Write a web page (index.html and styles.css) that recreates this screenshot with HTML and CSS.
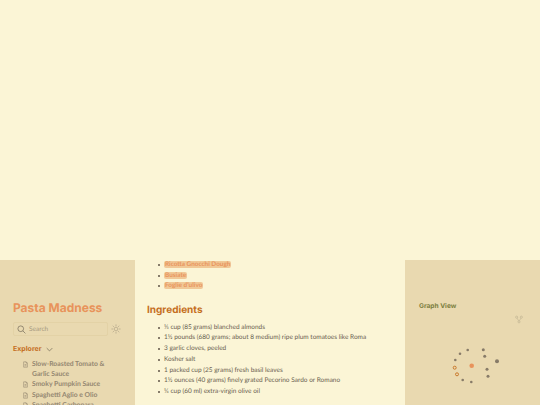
FILE: index.html
```html
<!DOCTYPE html>
<html lang="en">
<head>
<meta charset="utf-8">
<title>Pasta Madness</title>
<link rel="stylesheet" href="styles.css">
</head>
<body>
<div class="page">
  <aside class="left">
    <h1 class="title">Pasta Madness</h1>
    <div class="search-row">
      <div class="search">
        <svg class="search-icon" viewBox="0 0 12 12"><circle cx="5" cy="5" r="3.8"/><path d="M7.8 7.8 11.2 11.2"/></svg>
        <span>Search</span>
      </div>
      <svg class="sun" viewBox="0 0 12 12"><circle cx="6" cy="6" r="2.2"/><path d="M6 .5v2M6 9.5v2M.5 6h2M9.5 6h2M2.1 2.1l1.4 1.4M8.5 8.5l1.4 1.4M2.1 9.9l1.4-1.4M8.5 3.5l1.4-1.4"/></svg>
    </div>
    <div class="explorer"><span>Explorer</span>
      <svg class="chev" viewBox="0 0 10 6"><path d="M1 1l4 4 4-4"/></svg>
    </div>
    <ul class="files">
      <li><svg class="file" viewBox="0 0 8 10"><path d="M1 .7h4l2 2v6.6H1zM5 .7v2h2M2.5 5h3M2.5 7h3"/></svg><span>Slow-Roasted Tomato &amp; Garlic Sauce</span></li>
      <li><svg class="file" viewBox="0 0 8 10"><path d="M1 .7h4l2 2v6.6H1zM5 .7v2h2M2.5 5h3M2.5 7h3"/></svg><span>Smoky Pumpkin Sauce</span></li>
      <li><svg class="file" viewBox="0 0 8 10"><path d="M1 .7h4l2 2v6.6H1zM5 .7v2h2M2.5 5h3M2.5 7h3"/></svg><span>Spaghetti Aglio e Olio</span></li>
      <li><svg class="file" viewBox="0 0 8 10"><path d="M1 .7h4l2 2v6.6H1zM5 .7v2h2M2.5 5h3M2.5 7h3"/></svg><span>Spaghetti Carbonara</span></li>
    </ul>
  </aside>
  <main class="center">
    <ul class="links">
      <li><mark>Ricotta Gnocchi Dough</mark></li>
      <li><mark>Busiate</mark></li>
      <li><mark>Foglie d’ulivo</mark></li>
    </ul>
    <h2 class="heading">Ingredients</h2>
    <ul class="ingredients">
      <li>⅓ cup (85 grams) blanched almonds</li>
      <li>1½ pounds (680 grams; about 8 medium) ripe plum tomatoes like Roma</li>
      <li>3 garlic cloves, peeled</li>
      <li>Kosher salt</li>
      <li>1 packed cup (25 grams) fresh basil leaves</li>
      <li>1½ ounces (40 grams) finely grated Pecorino Sardo or Romano</li>
      <li>¼ cup (60 ml) extra-virgin olive oil</li>
    </ul>
  </main>
  <aside class="right">
    <div class="graph-head">Graph View</div>
    <div class="graph-canvas">
      <svg class="graph-icon" viewBox="0 0 12 12"><circle cx="2.5" cy="2.5" r="1.6"/><circle cx="9.5" cy="2.5" r="1.6"/><circle cx="6" cy="9.5" r="1.6"/><path d="M3.2 4l2.2 4M8.8 4 6.6 8"/></svg>
      <svg class="graph" viewBox="0 0 135 145">
        <circle class="n" cx="62.7" cy="90" r="1.3"/>
        <circle class="n" cx="78.3" cy="89.7" r="1.5"/>
        <circle class="n" cx="55" cy="93.7" r="1.3"/>
        <circle class="n" cx="79.7" cy="96.3" r="1.5"/>
        <circle class="n" cx="92" cy="101.3" r="2"/>
        <circle class="n" cx="50.3" cy="100" r="1.3"/>
        <circle class="hub" cx="66.7" cy="105.7" r="2.3"/>
        <circle class="ring" cx="49.7" cy="107.7" r="1.5"/>
        <circle class="n" cx="82" cy="109.3" r="1.5"/>
        <circle class="ring" cx="52" cy="114.3" r="1.5"/>
        <circle class="n" cx="83" cy="116.3" r="1.5"/>
        <circle class="n" cx="57.7" cy="120" r="1.3"/>
        <circle class="n" cx="66.3" cy="122" r="1.3"/>
      </svg>
    </div>
  </aside>
</div>
</body>
</html>
```
FILE: styles.css
```css
* { box-sizing: border-box; }
html, body { margin: 0; height: 100%; overflow: hidden; }
body { background: #fbf5d6; font-family: Lato, sans-serif; color: #6a5f50; text-rendering: geometricPrecision; }
.page { display: grid; grid-template-columns: 135px 270px 135px; margin-top: 260px; height: 145px; overflow: hidden; }
.left, .right { background: #e9d9b0; }
.left { padding: 41px 13px 0; }
.title { margin: 0; font: 700 12px/14px Inter, sans-serif; color: #e8935b; }
.search-row { display: flex; align-items: center; gap: 4px; margin-top: 7px; }
.search { width: 95px; height: 14px; border: 1px solid #e3d2a6; border-radius: 2px; display: flex; align-items: center; gap: 3px; padding-left: 3px; font-size: 6.5px; color: #a79a80; }
.search-icon { width: 9px; height: 9px; fill: none; stroke: #6f6655; stroke-width: .9; }
.sun { width: 10px; height: 10px; margin-left: -1px; fill: none; stroke: #a79a80; stroke-width: .7; }
.explorer { display: flex; align-items: center; gap: 4px; margin-top: 8px; font: 700 7px/10px Inter, sans-serif; color: #c56f1f; }
.chev { width: 7px; height: 5px; fill: none; stroke: #6f6655; stroke-width: 1; }
.files { list-style: none; margin: 5px 0 0; padding: 0 10px 0 10px; font-size: 6.8px; font-weight: 700; line-height: 10.2px; color: #948770; }
.files li { display: flex; gap: 4px; }
.file { flex: none; width: 5px; height: 7px; margin-top: 2px; fill: none; stroke: #8a7d68; stroke-width: .8; }
.center { padding: 0 12px; }
.links { list-style: none; margin: 0; padding: 0 0 0 17px; font-size: 6.4px; line-height: 10.5px; font-weight: 700; }
.links li, .ingredients li { position: relative; }
.links li::before, .ingredients li::before { content: ""; position: absolute; left: -6px; top: 4px; width: 2px; height: 2px; border-radius: 50%; background: #5f5346; }
.links mark { background: #f1c896; color: #e8935b; border-radius: 2px; padding: 0 1px; }
.heading { margin: 12px 0 0; font: 700 10px/12px Inter, sans-serif; color: #c56f1f; }
.ingredients { list-style: none; margin: 7px 0 0; padding: 0 0 0 17px; font-size: 6.5px; line-height: 10.8px; }
.right { padding: 41px 14px 0; position: relative; }
.graph-head { font: 700 6.6px/10px Inter, sans-serif; color: #7d7f3f; }
.graph-canvas { position: absolute; inset: 0; }
.graph { position: absolute; inset: 0; width: 135px; height: 145px; }
.graph-icon { position: absolute; left: 110px; top: 55px; width: 8px; height: 9px; fill: none; stroke: #bcb08f; stroke-width: .9; }
.n { fill: #877b68; }
.hub { fill: #e8935b; }
.ring { fill: #e9d9b0; stroke: #c56f1f; stroke-width: .9; }
```
